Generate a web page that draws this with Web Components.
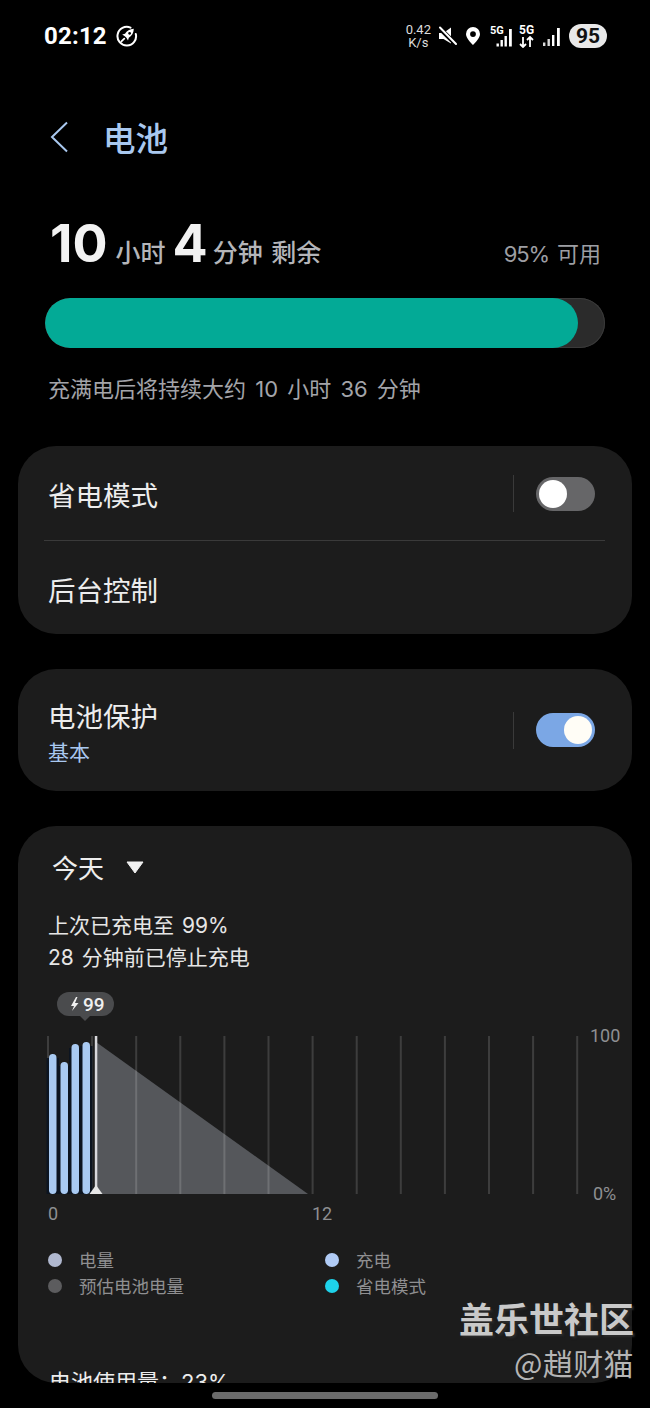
<!DOCTYPE html>
<html lang="zh-CN">
<head>
<meta charset="utf-8">
<title>电池</title>
<style>
  html, body {
    margin: 0;
    background: #000;
  }
  body {
    width: 650px;
    height: 1408px;
    overflow: hidden;
    position: relative;
    font-family: Roboto, "Noto Sans CJK SC", sans-serif;
    color: #f0f0f0;
  }
  settings-card { margin: 0 18px; }
  settings-card + settings-card { margin-top: 35px; }
</style>
</head>
<body>
<status-bar></status-bar>
<page-header>电池</page-header>
<battery-summary></battery-summary>
<settings-card>
  <setting-row title="省电模式" toggle="off" line></setting-row>
  <setting-row title="后台控制" last></setting-row>
</settings-card>
<settings-card>
  <setting-row title="电池保护" sub="基本" toggle="on"></setting-row>
</settings-card>
<usage-card></usage-card>
<water-mark></water-mark>
<home-bar></home-bar>

<script>
class StatusBar extends HTMLElement {
  constructor() {
    super();
    this.attachShadow({ mode: "open" });
  }

  connectedCallback() {
    this.shadowRoot.innerHTML = `
      <style>
        :host {
          display: flex;
          align-items: center;
          justify-content: space-between;
          height: 72px;
          padding: 0 43px 0 44px;
          color: #fff;
        }
        .left, .right { display: flex; align-items: center; }
        .time { font: 700 24px/1 Roboto, sans-serif; letter-spacing: .2px; }
        .left svg { margin-left: 9px; }
        .speed {
          font: 400 13px/13px Roboto, sans-serif;
          text-align: center;
          color: #ddd;
          margin-right: 7px;
        }
        .net {
          position: relative;
          width: 22px;
          height: 24px;
        }
        .net span {
          position: absolute;
          left: 0;
          top: 1px;
          font: 700 11px/1 Roboto, sans-serif;
        }
        .net svg { position: absolute; left: 0; top: 0; }
        .pill {
          width: 38px;
          height: 24px;
          margin-left: 7px;
          border-radius: 12px;
          background: #e9e9e9;
          color: #111;
          font: 700 21px/24px Roboto, sans-serif;
          text-align: center;
        }
      </style>
      <div class="left">
        <span class="time">02:12</span>
        <svg width="22" height="22" viewBox="0 0 22 22" fill="none">
          <path d="M14.500 2.700A9.300 9.300 0 1 0 19.800 9" stroke="#fff" stroke-width="2" stroke-linecap="round"/>
          <path fill="#fff" fill-rule="evenodd" d="M17.800 3.800c-4 .2-7 1.800-8.800 5L6.200 9.600 8.800 11.200 10.400 12.800 12 15.500l.8-2.800c3.300-1.900 4.900-4.900 5-8.900zM13.600 6.900a1.400 1.400 0 1 0 .01 0z"/>
          <path d="M5.400 16.400l2.900-2.800" stroke="#fff" stroke-width="1.800" stroke-linecap="round"/>
        </svg>
      </div>
      <div class="right">
        <div class="speed">0.42<br>K/s</div>
        <svg width="19" height="20" viewBox="0 0 19 20" style="margin-right:8px">
          <path d="M1 7h4.500L13 1.500v16L5.500 13H1z" fill="#fff"/>
          <path d="M1 1.500l17 17" stroke="#000" stroke-width="4.500"/>
          <path d="M2 1.500l16 16.500" stroke="#fff" stroke-width="2" stroke-linecap="round"/>
        </svg>
        <svg width="16" height="20" viewBox="0 0 16 20" style="margin-right:9px">
          <path fill-rule="evenodd" fill="#fff" d="M8 1a7 7 0 0 1 7 7c0 4-4.500 8.500-7 11-2.500-2.500-7-7-7-11a7 7 0 0 1 7-7zm0 4.200a2.900 2.900 0 1 0 0 5.800 2.900 2.900 0 0 0 0-5.800z"/>
        </svg>
        <div class="net" style="margin-right:7px">
          <span>5G</span>
          <svg width="23" height="24" viewBox="0 0 23 24" fill="#fff">
            <rect x="6.500" y="19.500" width="2.400" height="3"/>
            <rect x="10.500" y="16" width="2.400" height="6.500"/>
            <rect x="14.500" y="12" width="2.400" height="10.500"/>
            <rect x="19" y="5" width="2.800" height="17.500"/>
          </svg>
        </div>
        <div class="net" style="width:16px;margin-right:8px">
          <span style="font-size:12px;top:0">5G</span>
          <svg width="16" height="24" viewBox="0 0 16 24" fill="none" stroke="#fff" stroke-width="1.800">
            <path d="M4 13v10M1 20l3 3 3-3M11 23V13M8 16l3-3 3 3"/>
          </svg>
        </div>
        <svg width="19" height="20" viewBox="0 0 19 20" fill="#fff" style="margin-top:1px">
          <rect x="0" y="15.500" width="2.400" height="3.500" opacity=".85"/>
          <rect x="4.500" y="12" width="2.400" height="7" opacity=".85"/>
          <rect x="9" y="8" width="2.400" height="11"/>
          <rect x="14" y="1" width="2.800" height="18"/>
        </svg>
        <div class="pill">95</div>
      </div>
    `;
  }
}

class PageHeader extends HTMLElement {
  constructor() {
    super();
    this.attachShadow({ mode: "open" });
  }

  connectedCallback() {
    this.shadowRoot.innerHTML = `
      <style>
        :host {
          display: flex;
          align-items: center;
          height: 56px;
          margin-top: 37px;
          padding-left: 50px;
          color: #a9c8ef;
        }
        svg { margin-right: 34px; }
        .title { font: 500 32.500px/1 "Noto Sans CJK SC", sans-serif; }
      </style>
      <svg width="19" height="32" viewBox="0 0 19 32" fill="none">
        <path d="M17 1.500 2 16l15 14.500" stroke="#a9c8ef" stroke-width="2"/>
      </svg>
      <span class="title"><slot></slot></span>
    `;
  }
}

class BatterySummary extends HTMLElement {
  constructor() {
    super();
    this.attachShadow({ mode: "open" });
  }

  connectedCallback() {
    this.shadowRoot.innerHTML = `
      <style>
        :host {
          display: block;
          margin-top: 41px;
          padding: 0 45px;
          height: 240px;
        }
        .top {
          display: flex;
          justify-content: space-between;
          align-items: baseline;
          height: 76px;
          padding: 0 4px 0 5px;
        }
        .left { display: flex; align-items: baseline; gap: 8px; }
        b { font: 700 52px/76px Inter, sans-serif; color: #f2f2f2; }
        .unit { font: 500 25px/1 "Noto Sans CJK SC", sans-serif; color: #b4b5b9; word-spacing: 3px; }
        .four { margin-left: -1px; }
        .rest { margin-left: -3px; }
        .avail { font: 400 22px/1 Inter, "Noto Sans CJK SC", sans-serif; color: #9d9ea3; }
        .avail span { letter-spacing: -1.200px; margin-right: 2px; }
        .bar {
          margin-top: 16px;
          height: 50px;
          border-radius: 25px;
          background: #2b2b2b;
          box-shadow: inset 0 0 0 1px #3a3a3a;
          overflow: hidden;
        }
        .fill {
          width: 533px;
          height: 100%;
          border-radius: 25px;
          background: #03aa96;
        }
        .note {
          margin-top: 28px;
          padding-left: 3px;
          font: 400 22px/26px Inter, "Noto Sans CJK SC", sans-serif;
          color: #a3a4a9;
          word-spacing: 3px;
        }
      </style>
      <div class="top">
        <div class="left">
          <b>10</b><span class="unit">小时</span><b class="four">4</b><span class="unit rest">分钟 剩余</span>
        </div>
        <div class="avail"><span>95%</span> 可用</div>
      </div>
      <div class="bar"><div class="fill"></div></div>
      <div class="note">充满电后将持续大约 10 小时 36 分钟</div>
    `;
  }
}

class SettingsCard extends HTMLElement {
  constructor() {
    super();
    this.attachShadow({ mode: "open" });
  }

  connectedCallback() {
    this.shadowRoot.innerHTML = `
      <style>
        :host {
          display: block;
          background: #1c1c1c;
          border-radius: 38px;
          overflow: hidden;
        }
      </style>
      <slot></slot>
    `;
  }
}

class SettingRow extends HTMLElement {
  constructor() {
    super();
    this.attachShadow({ mode: "open" });
  }

  connectedCallback() {
    const title = this.getAttribute("title");
    const sub = this.getAttribute("sub");
    const toggle = this.getAttribute("toggle");
    this.shadowRoot.innerHTML = `
      <style>
        :host {
          display: flex;
          align-items: center;
          position: relative;
          box-sizing: border-box;
          height: ${sub ? 122 : 94}px;
          padding: 0 37px 0 30px;
        }
        :host([line]) { height: 95px; }
        :host([last]) { height: 93px; padding-top: 3px; }
        :host([line])::after {
          content: "";
          position: absolute;
          left: 26px;
          right: 27px;
          bottom: 0;
          height: 1px;
          background: #3a3a3a;
        }
        .text { flex: 1; }
        .text.two { padding-top: 2px; }
        .title { font: 400 27.500px/34px "Noto Sans CJK SC", sans-serif; color: #ededed; }
        .sub { font: 400 21px/26px "Noto Sans CJK SC", sans-serif; color: #a9c8ef; margin-top: 6px; }
        .sep { width: 1px; height: 37px; background: #3a3a3a; margin-right: 22px; }
      </style>
      <div class="text ${sub ? "two" : ""}">
        <div class="title">${title}</div>
        ${sub ? `<div class="sub">${sub}</div>` : ""}
      </div>
      ${toggle ? `<div class="sep"></div><toggle-switch ${toggle === "on" ? "on" : ""}></toggle-switch>` : ""}
    `;
  }
}

class ToggleSwitch extends HTMLElement {
  constructor() {
    super();
    this.attachShadow({ mode: "open" });
  }

  connectedCallback() {
    this.shadowRoot.innerHTML = `
      <style>
        :host {
          display: flex;
          align-items: center;
          justify-content: flex-start;
          width: 59px;
          height: 34px;
          box-sizing: border-box;
          padding: 0 3px;
          border-radius: 17px;
          background: #666668;
        }
        :host([on]) { background: #7ba7e5; justify-content: flex-end; }
        i {
          width: 28px;
          height: 28px;
          border-radius: 50%;
          background: #fff;
        }
        :host([on]) i { background: #fffdf6; }
      </style>
      <i></i>
    `;
  }
}

class UsageCard extends HTMLElement {
  constructor() {
    super();
    this.attachShadow({ mode: "open" });
  }

  connectedCallback() {
    const grid = [];
    for (let i = 0; i < 13; i++) {
      const x = 30 + i * 44.1;
      grid.push(`<rect x="${x - 1}" y="0" width="2" height="158" fill="#fff" opacity=".15"/>`);
    }
    const bars = [[31, 18], [42.5, 26], [53.5, 8], [64.5, 6]].map(([x, y]) => `
        <rect x="${x - 2.5}" y="${y + 4}" width="12.500" height="${154 - y}" fill="#0c1420"/>`).join("");
    const fills = [[31, 18], [42.5, 26], [53.5, 8], [64.5, 6]].map(([x, y]) => `
        <rect x="${x}" y="${y}" width="7.500" height="${158 - y}" rx="3.700" fill="#a9caf2"/>`).join("");
    this.shadowRoot.innerHTML = `
      <style>
        :host {
          display: block;
          position: relative;
          margin: 35px 18px 0;
          height: 557px;
          box-sizing: border-box;
          padding: 25px 30px 0;
          background: #1c1c1c;
          border-radius: 38px;
          overflow: hidden;
        }
        .range {
          display: flex;
          align-items: center;
          gap: 22px;
          padding-left: 4px;
          font: 400 26px/32px "Noto Sans CJK SC", sans-serif;
          color: #ededed;
        }
        .range svg { display: block; }
        .info {
          margin-top: 27px;
          font: 400 21px/32px Inter, "Noto Sans CJK SC", sans-serif;
          color: #e6e6e6;
          word-spacing: 2px;
        }
        .chart {
          display: block;
          margin: 18px 0 0 -30px;
        }
        .chart text { font: 400 18px Roboto, sans-serif; fill: #8e8f92; }
        .chart .tip { font: 500 19px Roboto, sans-serif; fill: #f0f0f0; }
        .legend {
          display: grid;
          grid-template-columns: 277px 1fr;
          margin-top: 21px;
          row-gap: 4px;
          font: 400 17.500px/22px "Noto Sans CJK SC", sans-serif;
          color: #8f8f91;
        }
        .legend div { display: flex; align-items: center; gap: 17px; }
        .legend i { width: 14px; height: 14px; border-radius: 50%; }
        .used {
          position: absolute;
          left: 31px;
          top: 541px;
          font: 400 22px/30px Inter, "Noto Sans CJK SC", sans-serif;
          color: #ededed;
        }
      </style>
      <div class="range">
        <span>今天</span>
        <svg width="18" height="13" viewBox="0 0 18 13"><path d="M1 1h16l-8 11z" fill="#f0f0f0" stroke="#f0f0f0" stroke-linejoin="round"/></svg>
      </div>
      <div class="info">上次已充电至 99%<br>28 分钟前已停止充电</div>
      <svg class="chart" width="614" height="236" viewBox="0 -44 614 236">
        <rect x="39" y="-44" width="57" height="24" rx="12" fill="#4a4b4d"/>
        <path d="M62 -20h10l-5 5z" fill="#4a4b4d"/>
        <path d="M58 -39 53 -30H56L54 -25 60.500 -33H57L59.500 -39z" fill="#f0f0f0"/>
        <text class="tip" x="65" y="-25">99</text>
        <path d="M78 6 290 158H78z" fill="#55575b"/>
        ${grid.join("")}
        ${bars}
        ${fills}
        <rect x="76.800" y="0" width="2.500" height="158" fill="#d8d8dc"/>
        <path d="M71.500 158l6.500-9 6.500 9z" fill="#e6e6e6"/>
        <text x="30" y="184">0</text>
        <text x="294" y="184">12</text>
        <text x="572" y="6">100</text>
        <text x="575" y="164">0%</text>
      </svg>
      <div class="legend">
        <div><i style="background:#b0b8cf"></i>电量</div>
        <div><i style="background:#b0cbf5"></i>充电</div>
        <div><i style="background:#5c5c5e"></i>预估电池电量</div>
        <div><i style="background:#1ed2ea"></i>省电模式</div>
      </div>
      <div class="used">电池使用量：23%</div>
    `;
  }
}

class WaterMark extends HTMLElement {
  constructor() {
    super();
    this.attachShadow({ mode: "open" });
  }

  connectedCallback() {
    this.shadowRoot.innerHTML = `
      <style>
        :host {
          display: block;
          position: absolute;
          right: 16px;
          top: 1296px;
          text-align: right;
          font-family: "Noto Sans CJK SC", sans-serif;
        }
        .brand {
          font-size: 35px;
          line-height: 44px;
          font-weight: 700;
          color: #c9c9c9;
          text-shadow: 2px 2px 2px #2a2a2a;
        }
        .user {
          font-size: 30px;
          line-height: 44px;
          color: #b5b5b5;
          letter-spacing: .4px;
        }
      </style>
      <div class="brand">盖乐世社区</div>
      <div class="user">@趙财猫</div>
    `;
  }
}

class HomeBar extends HTMLElement {
  constructor() {
    super();
    this.attachShadow({ mode: "open" });
  }

  connectedCallback() {
    this.shadowRoot.innerHTML = `
      <style>
        :host {
          display: block;
          position: absolute;
          left: 212px;
          top: 1392px;
          width: 226px;
          height: 7px;
          border-radius: 4px;
          background: #6b6b6b;
        }
      </style>
    `;
  }
}

customElements.define("status-bar", StatusBar);
customElements.define("page-header", PageHeader);
customElements.define("battery-summary", BatterySummary);
customElements.define("settings-card", SettingsCard);
customElements.define("setting-row", SettingRow);
customElements.define("toggle-switch", ToggleSwitch);
customElements.define("usage-card", UsageCard);
customElements.define("water-mark", WaterMark);
customElements.define("home-bar", HomeBar);
</script>
</body>
</html>
